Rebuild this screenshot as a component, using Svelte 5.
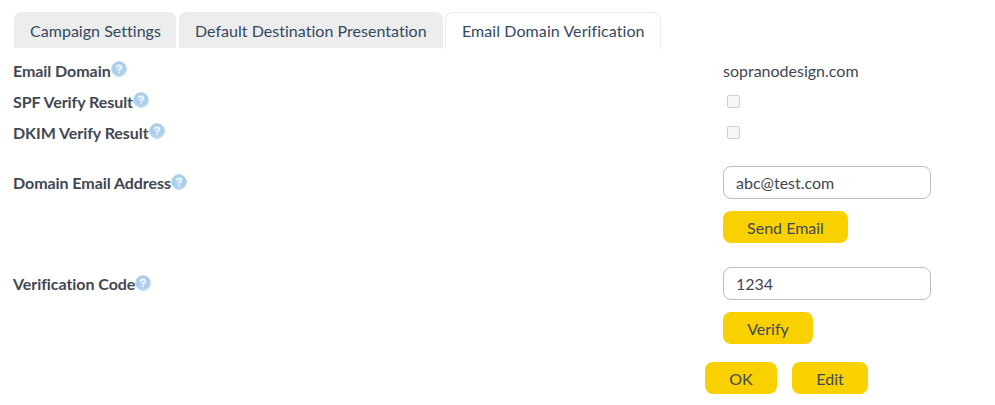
<script lang="ts">
	const tabs = [
		{ name: 'Campaign Settings', active: false },
		{ name: 'Default Destination Presentation', active: false },
		{ name: 'Email Domain Verification', active: true }
	];
</script>

{#snippet help()}
	<svg class="help" width="16" height="16" viewBox="0 0 16 16" aria-hidden="true">
		<defs>
			<radialGradient id="helpFill" cx="50%" cy="45%" r="55%">
				<stop offset="0" stop-color="#c9dff2" />
				<stop offset="0.72" stop-color="#a6cae9" />
				<stop offset="1" stop-color="#dbe9f6" />
			</radialGradient>
		</defs>
		<circle cx="8" cy="8" r="7.3" fill="url(#helpFill)" stroke="#a6c9e8" stroke-width="0.9" />
		<path class="help-mark" d="M5.6 6.2 C5.7 3.7 10.4 3.7 10.4 6.2 C10.4 7.8 8 7.7 8 9.4" />
		<circle cx="8" cy="11.6" r="1" fill="#eef5fb" />
	</svg>
{/snippet}

<div class="page">
	<nav class="tabs">
		{#each tabs as tab}
			<div class="tab" class:active={tab.active}>{tab.name}</div>
		{/each}
	</nav>

	<section class="form">
		<div class="row first">
			<div class="label">Email Domain{@render help()}</div>
			<div class="value">sopranodesign.com</div>
		</div>
		<div class="row check">
			<div class="label">SPF Verify Result{@render help()}</div>
			<div class="value"><span class="checkbox"></span></div>
		</div>
		<div class="row check">
			<div class="label">DKIM Verify Result{@render help()}</div>
			<div class="value"><span class="checkbox"></span></div>
		</div>

		<div class="row field email">
			<div class="label">Domain Email Address{@render help()}</div>
			<div class="value stack">
				<input type="text" value="abc@test.com" />
				<button class="send">Send Email</button>
			</div>
		</div>

		<div class="row field code">
			<div class="label">Verification Code{@render help()}</div>
			<div class="value stack">
				<input type="text" value="1234" />
				<button class="verify">Verify</button>
			</div>
		</div>

		<div class="actions">
			<button class="ok">OK</button>
			<button class="edit">Edit</button>
		</div>
	</section>
</div>

<style>
	:global(body) {
		margin: 0;
		background: #fff;
		color: #3f4652;
		font-family: Lato, 'Open Sans', sans-serif;
	}

	.page {
		width: 995px;
		height: 405px;
		overflow: hidden;
	}

	.tabs {
		display: flex;
		align-items: flex-start;
		gap: 3px;
		padding: 12px 0 0 14px;
		height: 38px;
	}

	.tab {
		box-sizing: border-box;
		flex: none;
		width: 162px;
		height: 36px;
		padding: 0 0 0 16px;
		display: flex;
		align-items: center;
		background: #ededed;
		border-radius: 7px 7px 0 0;
		color: #34495e;
		font-size: 16px;
		letter-spacing: 0.03px;
	}

	.tab:nth-child(2) {
		width: 264px;
		margin-right: -1px;
	}

	.tab.active {
		width: 216px;
		height: 38px;
		padding: 0 0 2px 16px;
		background: #fff;
		border: 1px solid #ececec;
		border-bottom: none;
		letter-spacing: 0.08px;
	}

	.form {
		display: flex;
		flex-direction: column;
		padding-left: 13px;
	}

	.row {
		display: grid;
		grid-template-columns: 710px 1fr;
	}

	.row.first {
		margin-top: 9px;
		height: 24px;
		align-items: center;
	}

	.row.check {
		margin-top: 7px;
		height: 24px;
		align-items: center;
	}

	.row.email {
		margin-top: 21px;
	}

	.row.code {
		margin-top: 24px;
	}

	.label {
		display: flex;
		align-items: flex-start;
		font-size: 16px;
		font-weight: 700;
		letter-spacing: -0.06px;
		color: #414752;
		line-height: 24px;
	}

	.field .label {
		padding-top: 5px;
	}

	.help {
		margin-top: 2px;
		flex: none;
	}

	.field .help {
		margin-top: 3px;
	}

	.help-mark {
		fill: none;
		stroke: #eef5fb;
		stroke-width: 1.6;
	}

	.value {
		margin-top: -2px;
		font-size: 16px;
		color: #3f4652;
	}

	.field .value {
		margin-top: 0;
	}

	.checkbox {
		display: block;
		box-sizing: border-box;
		width: 13px;
		height: 13px;
		margin: 0 0 0 4px;
		background: #f6f6f6;
		border: 1px solid #cfcfcf;
		border-radius: 2px;
	}

	.stack {
		display: flex;
		flex-direction: column;
		align-items: flex-start;
		gap: 12px;
	}

	input {
		box-sizing: border-box;
		width: 208px;
		height: 33px;
		padding: 0 12px;
		border: 1px solid #bdbdbd;
		border-radius: 8px;
		background: #fff;
		color: #3f4652;
		font: 16px Lato, 'Open Sans', sans-serif;
		outline: none;
	}

	button {
		box-sizing: border-box;
		height: 32px;
		padding: 0;
		border: none;
		border-radius: 8px;
		background: #f9d000;
		color: #3f4a5c;
		font: 16px Lato, 'Open Sans', sans-serif;
	}

	.send {
		width: 125px;
	}

	.verify {
		width: 90px;
	}

	.actions {
		display: flex;
		gap: 15px;
		margin: 18px 0 0 692px;
	}

	.ok {
		width: 72px;
	}

	.edit {
		width: 76px;
	}
</style>
